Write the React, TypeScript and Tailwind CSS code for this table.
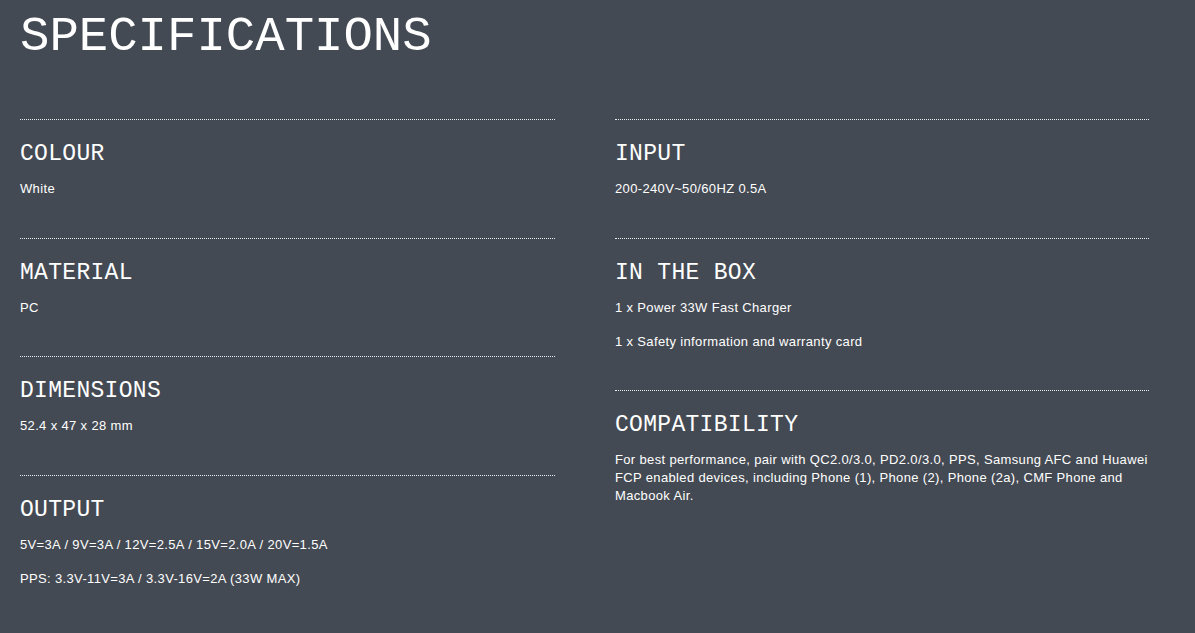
const left = [
  { title: 'COLOUR', lines: ['White'] },
  { title: 'MATERIAL', lines: ['PC'] },
  { title: 'DIMENSIONS', lines: ['52.4 x 47 x 28 mm'] },
  {
    title: 'OUTPUT',
    lines: ['5V=3A / 9V=3A / 12V=2.5A / 15V=2.0A / 20V=1.5A', 'PPS: 3.3V-11V=3A / 3.3V-16V=2A (33W MAX)'],
  },
];

const right = [
  { title: 'INPUT', lines: ['200-240V~50/60HZ 0.5A'] },
  { title: 'IN THE BOX', lines: ['1 x Power 33W Fast Charger', '1 x Safety information and warranty card'] },
  {
    title: 'COMPATIBILITY',
    lines: [
      'For best performance, pair with QC2.0/3.0, PD2.0/3.0, PPS, Samsung AFC and Huawei FCP enabled devices, including Phone (1), Phone (2), Phone (2a), CMF Phone and Macbook Air.',
    ],
  },
];

function Spec({ title, lines }: { title: string; lines: string[] }) {
  return (
    <div className="border-t border-dotted border-white/90 pt-[20px] pb-[39.5px]">
      <h3 className="font-['Liberation_Mono',monospace] text-[23px] leading-[28px] tracking-[0.3px] text-white">
        {title}
      </h3>
      <div className="mt-[12px] flex flex-col gap-[16px]">
        {lines.map((l, i) => (
          <p key={i} className="text-[13px] leading-[18px] tracking-[0.35px] text-white">
            {l}
          </p>
        ))}
      </div>
    </div>
  );
}

export default function App() {
  return (
    <div className="min-h-[633px] bg-[#444a53] px-[20px] pt-[8px] font-['Liberation_Sans',Arial,sans-serif]">
      <h1 className="font-['Liberation_Mono',monospace] text-[49px] leading-[59px] text-white">SPECIFICATIONS</h1>
      <div className="mt-[52px] grid grid-cols-[535px_534px] gap-x-[60px]">
        <div>
          {left.map((s) => (
            <Spec key={s.title} {...s} />
          ))}
        </div>
        <div>
          {right.map((s) => (
            <Spec key={s.title} {...s} />
          ))}
        </div>
      </div>
    </div>
  );
}
